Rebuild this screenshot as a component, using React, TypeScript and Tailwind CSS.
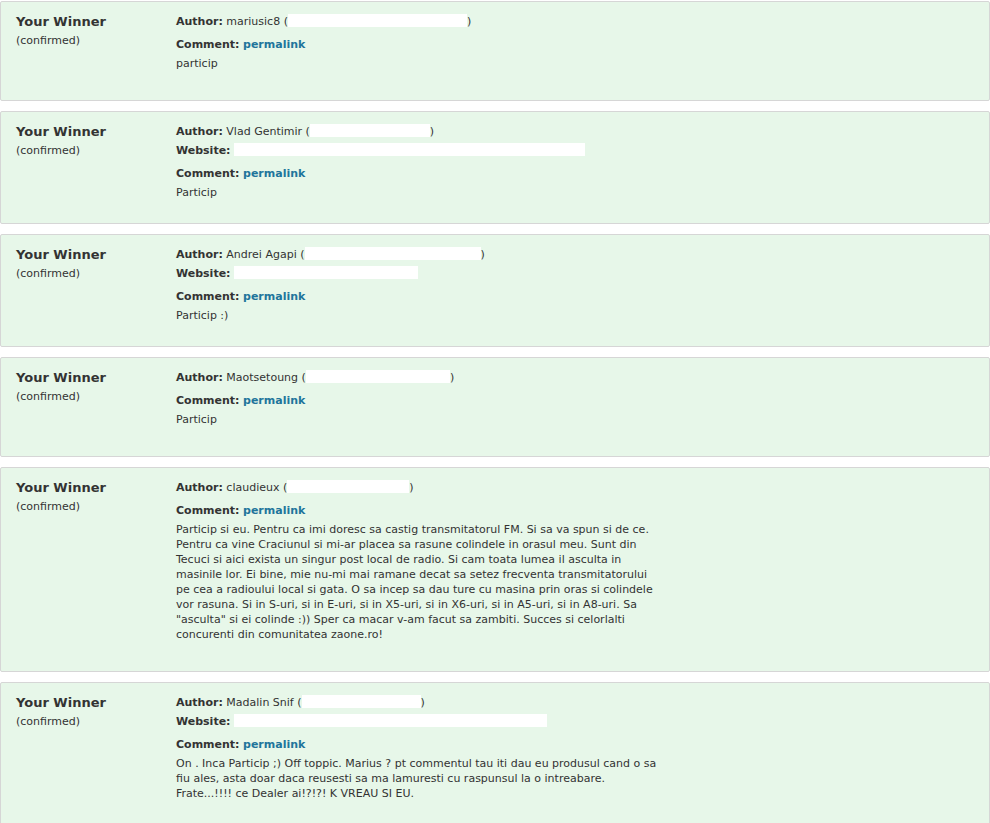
import * as React from 'react';

type Entry = {
  author: string;
  email: number; // width of the blanked e-mail
  website?: number; // width of the blanked website
  lines: string[];
};

const entries: Entry[] = [
  { author: 'mariusic8', email: 179, lines: ['particip'] },
  { author: 'Vlad Gentimir', email: 120, website: 351, lines: ['Particip'] },
  { author: 'Andrei Agapi', email: 176, website: 184, lines: ['Particip :)'] },
  { author: 'Maotsetoung', email: 144, lines: ['Particip'] },
  {
    author: 'claudieux',
    email: 122,
    lines: [
      'Particip si eu. Pentru ca imi doresc sa castig transmitatorul FM. Si sa va spun si de ce.',
      'Pentru ca vine Craciunul si mi-ar placea sa rasune colindele in orasul meu. Sunt din',
      'Tecuci si aici exista un singur post local de radio. Si cam toata lumea il asculta in',
      'masinile lor. Ei bine, mie nu-mi mai ramane decat sa setez frecventa transmitatorului',
      'pe cea a radioului local si gata. O sa incep sa dau ture cu masina prin oras si colindele',
      'vor rasuna. Si in S-uri, si in E-uri, si in X5-uri, si in X6-uri, si in A5-uri, si in A8-uri. Sa',
      '"asculta" si ei colinde :)) Sper ca macar v-am facut sa zambiti. Succes si celorlalti',
      'concurenti din comunitatea zaone.ro!',
    ],
  },
  {
    author: 'Madalin Snif',
    email: 119,
    website: 313,
    lines: [
      'On . Inca Particip ;) Off toppic. Marius ? pt commentul tau iti dau eu produsul cand o sa',
      'fiu ales, asta doar daca reusesti sa ma lamuresti cu raspunsul la o intreabare.',
      'Frate...!!!! ce Dealer ai!?!?! K VREAU SI EU.',
    ],
  },
];

// blanked-out (redacted) text
const Blank = ({ w }: { w: number }) => (
  <span className="inline-block h-[13px] bg-white align-[-2px]" style={{ width: w }} />
);

const WinnerCard = ({ e }: { e: Entry }) => (
  <div
    className={
      'flex rounded-[2px] border border-[#d6d6d6] bg-[#e7f7e9] pt-[10px] pl-[15px] ' +
      (e.website !== undefined ? 'pb-[23px]' : 'pb-[29px]')
    }
  >
    <div className="w-[160px] shrink-0">
      <div className="text-[13px] font-bold leading-[19px] text-[#333]">Your Winner</div>
      <div className="text-[11px] leading-[19px] text-[#333]">(confirmed)</div>
    </div>
    <div className="text-[11px] text-[#333]">
      <div className="leading-[19px] whitespace-nowrap">
        <b>Author:</b> {e.author} (<Blank w={e.email} />)
      </div>
      {e.website !== undefined && (
        <div className="leading-[19px] whitespace-nowrap">
          <b>Website:</b> <Blank w={e.website} />
        </div>
      )}
      <div className="mt-[4px] leading-[19px]">
        <b>Comment:</b>{' '}
        <a href="#" className="font-bold text-[#21759b]">
          permalink
        </a>
      </div>
      <div className="mt-[2px] leading-[15px]">
        {e.lines.map((l, i) => (
          <div key={i} className="whitespace-nowrap">
            {l}
          </div>
        ))}
      </div>
    </div>
  </div>
);

export default function App() {
  return (
    <div
      className="flex w-[990px] flex-col gap-[10px] bg-white pt-px"
      style={{ fontFamily: 'Verdana, "DejaVu Sans", sans-serif' }}
    >
      {entries.map((e, i) => (
        <WinnerCard key={i} e={e} />
      ))}
    </div>
  );
}
